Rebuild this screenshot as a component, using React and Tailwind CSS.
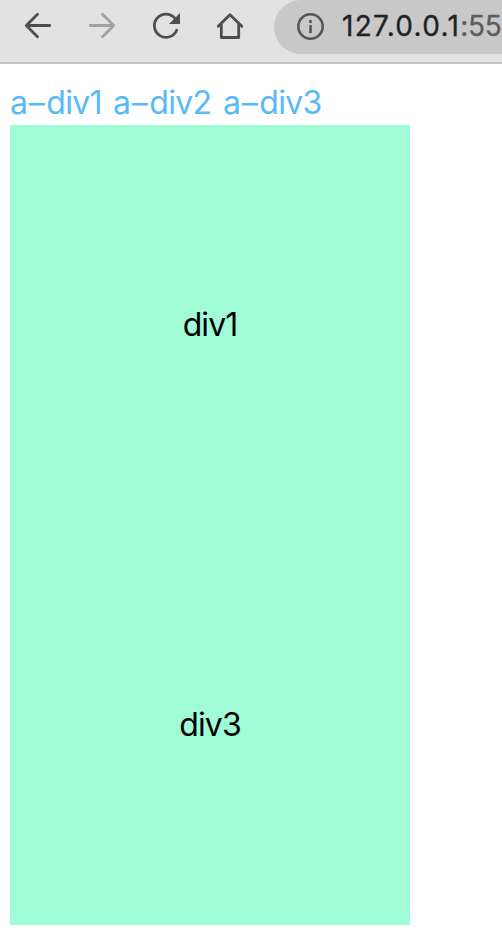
function TabLink({ n, className }) {
  return (
    <a className={className}>
      a<span className="ml-[1px] mr-[1px] inline-block w-[17px] text-center tracking-normal">–</span>div{n}
    </a>
  );
}

export default function App() {
  return (
    <div className="flex h-[952px] w-[502px] flex-col overflow-hidden bg-white font-['Inter','Liberation_Sans',sans-serif]">
      <header className="flex h-16 shrink-0 border-b-2 border-[#c2c2c2] bg-[#e2e2e2]">
        <svg className="h-[62px] w-[260px] shrink-0" viewBox="0 0 260 62" fill="none" strokeWidth="2.8" strokeLinecap="round" strokeLinejoin="round">
          <path d="M49.7 25.5H27M37.5 14.3L26.3 25.5L37.5 36.7" stroke="#4e4e50" />
          <path d="M90.3 25.5H113M102.5 14.3L113.7 25.5L102.5 36.7" stroke="#a1a1a2" />
          <path d="M174.8 18.2A11.6 11.6 0 1 0 176.7 30.2" stroke="#4e4e50" />
          <path d="M180 13V24H169Z" fill="#4e4e50" />
          <path d="M218.2 26.3L230 14.7L241.8 26.3M221.3 24V37.5H238.7V24" stroke="#4e4e50" />
        </svg>
        <div className="ml-[14px] flex h-[54px] w-[228px] shrink-0 rounded-l-full bg-[#c8c8c8]">
          <svg className="ml-[22px] mt-[12px] h-7 w-7 shrink-0" viewBox="0 0 28 28" fill="none" stroke="#55555b" strokeWidth="2.6">
            <circle cx="14.5" cy="14.5" r="12.2" />
            <path d="M14.5 13V21M14.5 8V11" />
          </svg>
          <span className="ml-[18px] mt-[8px] text-[28px] leading-9 tracking-[1.3px] text-[#202124] [-webkit-text-stroke:0.3px]">127.0.0.1<span className="tracking-[-0.2px] text-[#5b5b5e]">:55</span></span>
        </div>
      </header>
      <main className="px-2.5 pt-[17px] text-[32px] tracking-[-0.7px]">
        <nav className="flex h-11 leading-[44px] text-[#58b9f9]">
          <TabLink n="1" className="w-[103px]" />
          <TabLink n="2" className="w-[110px]" />
          <TabLink n="3" className="w-[110px]" />
        </nav>
        <section className="h-[400px] w-[400px] bg-[#a0fbd7] text-center leading-[400px] tracking-[-0.9px] text-black">div1</section>
        <section className="h-[400px] w-[400px] bg-[#a0fbd7] text-center leading-[400px] tracking-[-0.9px] text-black">div3</section>
      </main>
    </div>
  );
}
